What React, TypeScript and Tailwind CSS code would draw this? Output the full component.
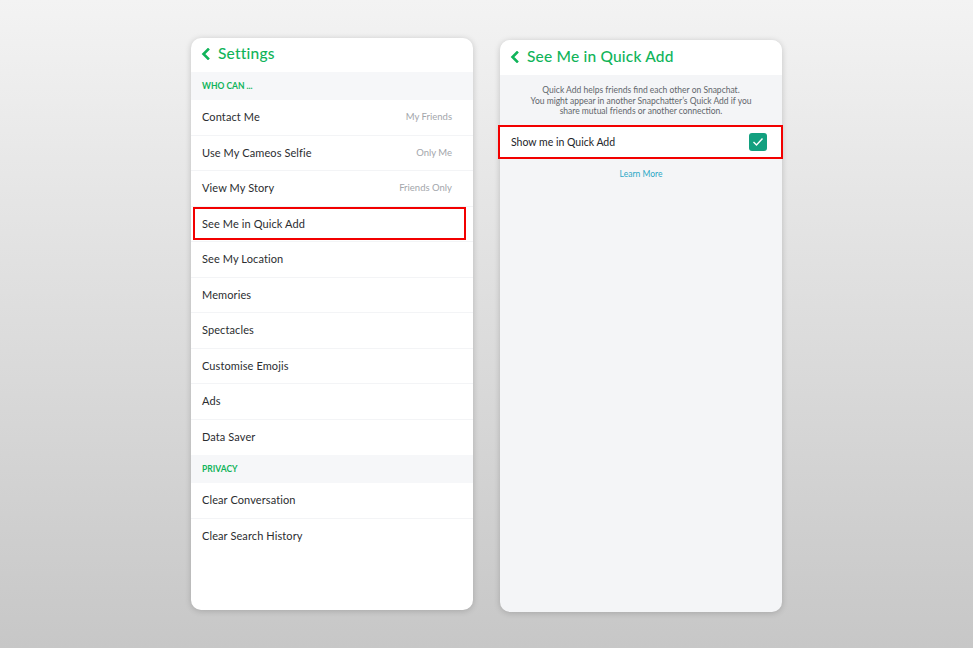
import React from "react";

const GREEN = "text-[#10b45a]";

function Chevron() {
  return (
    <svg width="9" height="12" viewBox="0 0 9 12" className="shrink-0">
      <path d="M7 1.5 L2.5 6 L7 10.5" fill="none" stroke="#10b45a" strokeWidth="2.6" strokeLinecap="square" />
    </svg>
  );
}

type Row = { label: string; value?: string; marked?: boolean };

const whoCan: Row[] = [
  { label: "Contact Me", value: "My Friends" },
  { label: "Use My Cameos Selfie", value: "Only Me" },
  { label: "View My Story", value: "Friends Only" },
  { label: "See Me in Quick Add", marked: true },
  { label: "See My Location" },
  { label: "Memories" },
  { label: "Spectacles" },
  { label: "Customise Emojis" },
  { label: "Ads" },
  { label: "Data Saver" },
];

const privacy: Row[] = [{ label: "Clear Conversation" }, { label: "Clear Search History" }];

function SectionHeader({ children }: { children: React.ReactNode }) {
  return (
    <div className={`flex h-[28px] items-center bg-[#f6f7f9] pl-[11px] text-[8.5px] font-bold ${GREEN}`}>
      {children}
    </div>
  );
}

function SettingRow({ row, last }: { row: Row; last?: boolean }) {
  return (
    <div
      className={`relative flex h-[35.5px] items-center justify-between pl-[11px] pr-[21px] ${
        last ? "" : "border-b border-[#f3f4f6]"
      }`}
    >
      <span className="text-[11px] tracking-[0.1px] text-[#2b2d30]">{row.label}</span>
      {row.value && <span className="text-[9.5px] text-[#a3a6ab]">{row.value}</span>}
      {row.marked && (
        <div className="absolute bottom-[1px] left-[2px] right-[7px] top-0 border-2 border-[#f20000]" />
      )}
    </div>
  );
}

function SettingsPanel() {
  return (
    <div className="flex h-[572px] w-[282px] flex-col overflow-hidden rounded-[10px] bg-white shadow-[0_1px_6px_rgba(0,0,0,0.18)]">
      <div className="flex h-[34px] items-center gap-[8px] pb-[3px] pl-[10px]">
        <Chevron />
        <span className={`text-[15.5px] font-medium tracking-[0.2px] ${GREEN}`}>Settings</span>
      </div>
      <SectionHeader>WHO CAN ...</SectionHeader>
      {whoCan.map((r, i) => (
        <SettingRow key={r.label} row={r} last={i === whoCan.length - 1} />
      ))}
      <SectionHeader>PRIVACY</SectionHeader>
      {privacy.map((r, i) => (
        <SettingRow key={r.label} row={r} last={i === privacy.length - 1} />
      ))}
    </div>
  );
}

function QuickAddPanel() {
  return (
    <div className="mt-[2px] flex h-[572px] w-[282px] flex-col rounded-[10px] bg-[#f4f5f7] shadow-[0_1px_6px_rgba(0,0,0,0.18)]">
      <div className="flex h-[35px] items-center gap-[8px] rounded-t-[10px] bg-white pb-[2px] pl-[10px]">
        <Chevron />
        <span className={`text-[15.5px] font-medium tracking-[0.2px] ${GREEN}`}>See Me in Quick Add</span>
      </div>
      <p className="pt-[10px] text-center text-[8.5px] leading-[10.5px] text-[#62666c]">
        Quick Add helps friends find each other on Snapchat.
        <br />
        You might appear in another Snapchatter’s Quick Add if you
        <br />
        share mutual friends or another connection.
      </p>
      <div className="relative mt-[10px] flex h-[31px] items-center justify-between bg-white pl-[11px] pr-[15px]">
        <span className="pt-[1px] text-[10.5px] text-[#222428]">Show me in Quick Add</span>
        <div className="flex h-[18px] w-[18px] items-center justify-center rounded-[3px] bg-[#12a07f]">
          <svg width="12" height="10" viewBox="0 0 12 10">
            <path d="M1.5 5 L4.5 8 L10.5 1.5" fill="none" stroke="white" strokeWidth="1.4" />
          </svg>
        </div>
        <div className="absolute -bottom-[1px] -left-[2px] -right-[1px] -top-[2px] border-2 border-[#f20000]" />
      </div>
      <div className="pt-[10px] text-center text-[8.5px] text-[#2ba8c6]">Learn More</div>
    </div>
  );
}

export default function App() {
  return (
    <div
      className="flex h-[648px] w-full items-start justify-center gap-[27px] bg-gradient-to-b from-[#f3f3f3] to-[#c7c7c7] pt-[38px]"
      style={{ fontFamily: "Lato, 'Noto Sans', sans-serif" }}
    >
      <SettingsPanel />
      <QuickAddPanel />
    </div>
  );
}
